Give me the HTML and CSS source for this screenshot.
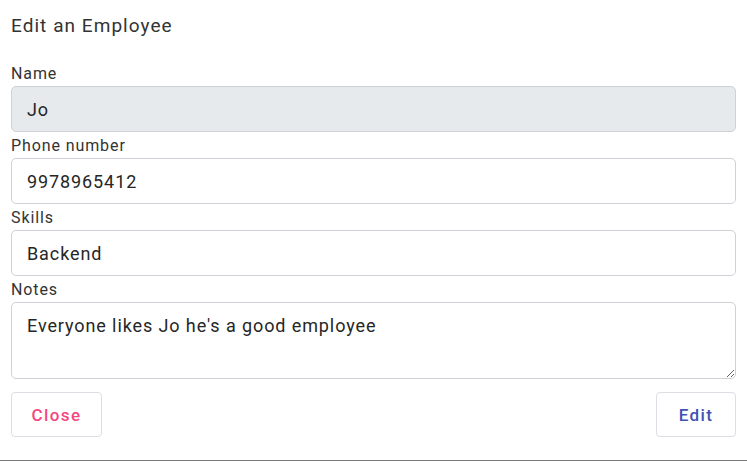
FILE: index.html
```html
<!DOCTYPE html>
<html>
<head>
<meta charset="utf-8">
<link rel="stylesheet" href="styles.css">
</head>
<body>
<div class="modal">
  <h1 class="title">Edit an Employee</h1>
  <form class="form">
    <div class="field">
      <label class="label">Name</label>
      <input class="input input-disabled" type="text" value="Jo" disabled>
    </div>
    <div class="field">
      <label class="label">Phone number</label>
      <input class="input" type="text" value="9978965412">
    </div>
    <div class="field">
      <label class="label">Skills</label>
      <input class="input" type="text" value="Backend">
    </div>
    <div class="field">
      <label class="label">Notes</label>
      <textarea class="input textarea">Everyone likes Jo he's a good employee</textarea>
    </div>
    <div class="actions">
      <button type="button" class="btn btn-close">Close</button>
      <button type="button" class="btn btn-edit">Edit</button>
    </div>
  </form>
</div>
</body>
</html>
```

FILE: styles.css
```css
* { box-sizing: border-box; }
html, body { margin: 0; padding: 0; background: #fff; }
body { font-family: Roboto, "Noto Sans", Arial, sans-serif; color: #333; }

.modal {
  width: 747px;
  height: 461px;
  padding: 0 11px;
  border-bottom: 1px solid #7a7a7a;
  background: #fff;
}

.title {
  margin: 0;
  padding-top: 14px;
  height: 62px;
  font-size: 19px;
  line-height: 24px;
  font-weight: 400;
  color: #333;
  letter-spacing: 1.05px;
}

.form { display: flex; flex-direction: column; }

.field { display: flex; flex-direction: column; margin-bottom: 2px; }

.label {
  font-size: 16px;
  line-height: 24px;
  color: #333;
  letter-spacing: 0.9px;
}

.input {
  width: 725px;
  height: 46px;
  border: 1px solid #ced1d6;
  border-radius: 5px;
  padding: 0 15px;
  font-family: Roboto, "Noto Sans", Arial, sans-serif;
  font-size: 18px;
  letter-spacing: 0.9px;
  color: #262626;
  background: #fff;
  outline: none;
}

.input-disabled {
  background: #e7eaed;
  color: #262626;
  -webkit-text-fill-color: #262626;
  opacity: 1;
}

.textarea {
  height: 77px;
  padding-top: 11px;
  line-height: 24px;
  resize: vertical;
}

.actions {
  display: flex;
  justify-content: space-between;
  margin-top: 11px;
}

.btn {
  height: 45px;
  background: #fff;
  border: 1px solid #dcdee3;
  border-radius: 4px;
  font-family: Roboto, "Noto Sans", Arial, sans-serif;
  font-size: 17px;
  font-weight: 500;
  letter-spacing: 1.4px;
  cursor: pointer;
}

.btn-close { width: 91px; color: #f4477f; }
.btn-edit { width: 80px; color: #3f51b5; }
```
